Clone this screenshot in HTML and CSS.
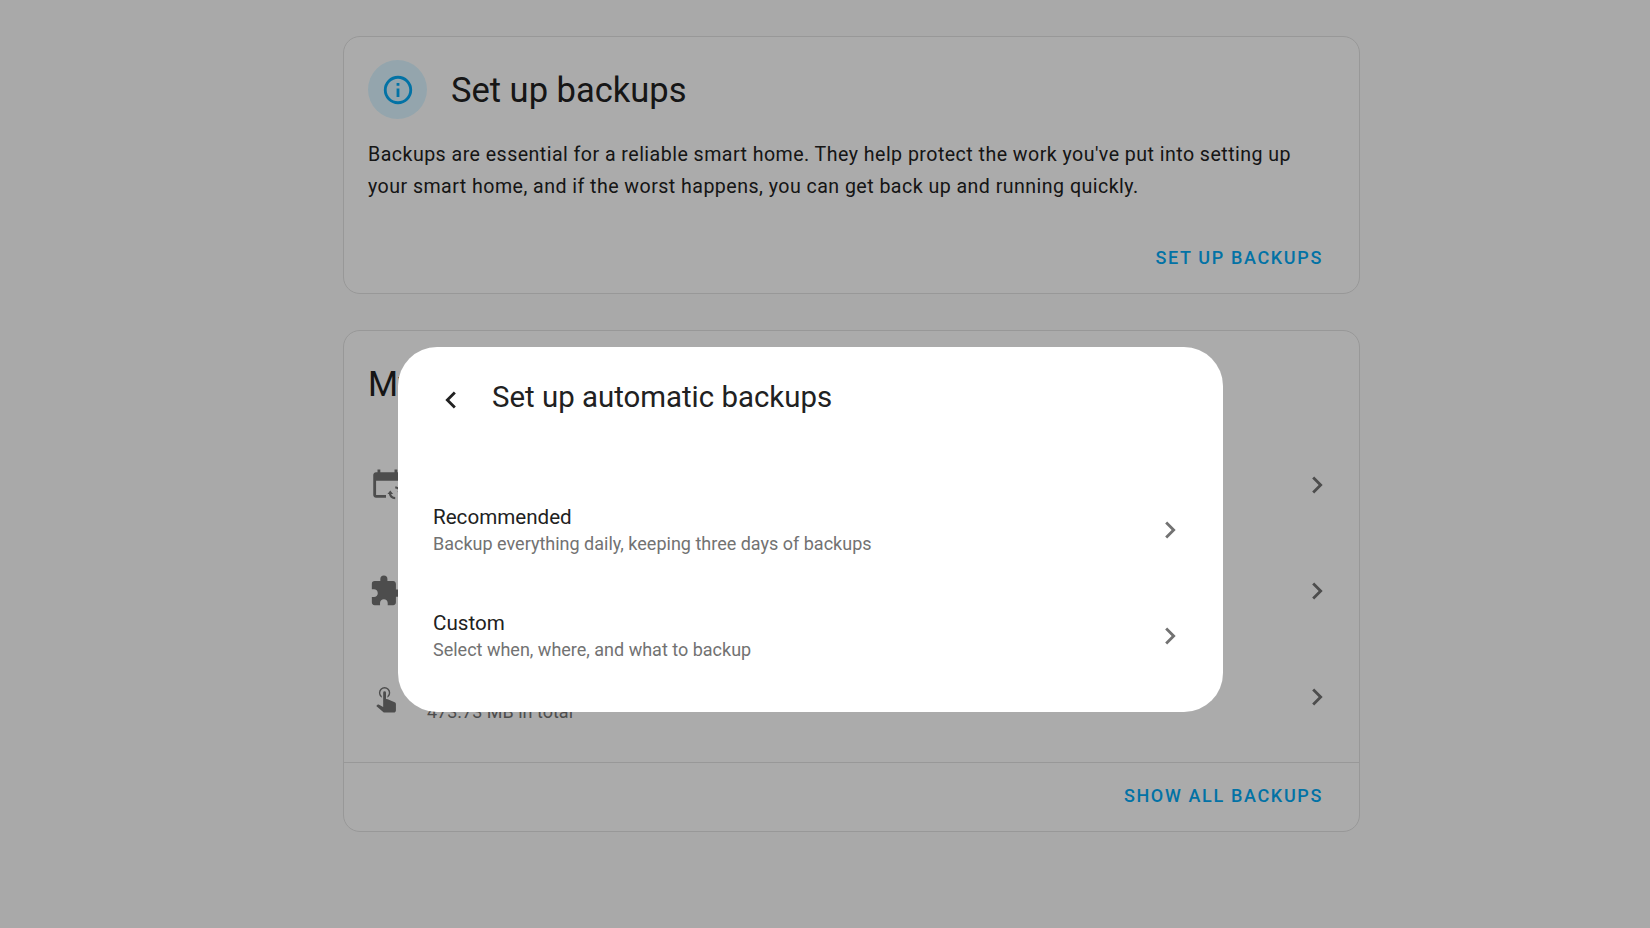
FILE: index.html
```html
<!DOCTYPE html>
<html lang="en">
<head>
    <meta charset="UTF-8">
    <title>Backups</title>
    <link rel="stylesheet" href="styles.css">
</head>
<body>
    <main class="page">
        <section class="card">
            <div class="card-head">
                <div class="info-badge">
                    <svg class="icon" viewBox="0 0 24 24"><path d="M11,9H13V7H11M12,20C7.59,20 4,16.41 4,12C4,7.59 7.59,4 12,4C16.41,4 20,7.59 20,12C20,16.41 16.41,20 12,20M12,2A10,10 0 0,0 2,12A10,10 0 0,0 12,22A10,10 0 0,0 22,12A10,10 0 0,0 12,2M11,17H13V11H11V17Z"/></svg>
                </div>
                <h2>Set up backups</h2>
            </div>
            <p class="card-text">Backups are essential for a reliable smart home. They help protect the work you've put into setting up your smart home, and if the worst happens, you can get back up and running quickly.</p>
            <div class="card-actions plain">
                <a class="action">SET UP BACKUPS</a>
            </div>
        </section>

        <section class="card">
            <h2 class="list-title">My backups</h2>
            <div class="rows">
                <div class="row">
                    <svg class="icon row-icon" viewBox="0 0 24 24"><path d="M5 3H6V1H8V3H18V1H20V3H21C22.1 3 23 3.9 23 5V11.5H21V9H5V19H12V21H5C3.9 21 3 20.1 3 19V5C3 3.9 3.9 3 5 3Z"/><path d="M18.5 13V14.5C20 14.5 21.2 15.5 21.4 16.6H20L22 19.2L24 16.6H22.9C22.7 14.5 20.8 13 18.5 13ZM15 15.8L13 18.4H14.1C14.3 20.5 16.2 22 18.5 22V20.5C17 20.5 15.8 19.5 15.6 18.4H17L15 15.8Z"/></svg>
                    <div class="row-text">
                        <div class="row-name">Automatic backups</div>
                        <div class="row-sub">3 backups</div>
                    </div>
                    <svg class="icon chevron" viewBox="0 0 24 24"><path d="M8.59,16.58L13.17,12L8.59,7.41L10,6L16,12L10,18L8.59,16.58Z"/></svg>
                </div>
                <div class="row">
                    <svg class="icon row-icon" viewBox="0 0 24 24"><path d="M20.5,11H19V7C19,5.89 18.1,5 17,5H13V3.5A2.5,2.5 0 0,0 10.5,1A2.5,2.5 0 0,0 8,3.5V5H4A2,2 0 0,0 2,7V10.8H3.5C5,10.8 6.2,12 6.2,13.5C6.2,15 5,16.2 3.5,16.2H2V20A2,2 0 0,0 4,22H7.8V20.5C7.8,19 9,17.8 10.5,17.8C12,17.8 13.2,19 13.2,20.5V22H17A2,2 0 0,0 19,20V16H20.5A2.5,2.5 0 0,0 23,13.5A2.5,2.5 0 0,0 20.5,11Z"/></svg>
                    <div class="row-text">
                        <div class="row-name">Additional backups</div>
                        <div class="row-sub">1 backup</div>
                    </div>
                    <svg class="icon chevron" viewBox="0 0 24 24"><path d="M8.59,16.58L13.17,12L8.59,7.41L10,6L16,12L10,18L8.59,16.58Z"/></svg>
                </div>
                <div class="row">
                    <svg class="icon row-icon" viewBox="0 0 24 24"><path d="M10,9A1,1 0 0,1 11,8A1,1 0 0,1 12,9V13.47L13.21,13.6L18.15,15.79C18.68,16.03 19,16.56 19,17.14V21.5C18.97,22.32 18.32,22.97 17.5,23H11C10.62,23 10.26,22.85 10,22.57L5.1,18.37L5.84,17.6C6.03,17.39 6.3,17.28 6.58,17.28H6.8L10,19V9M11,5A4,4 0 0,1 15,9C15,10.5 14.2,11.77 13,12.46V11.24C13.61,10.69 14,9.89 14,9A3,3 0 0,0 11,6A3,3 0 0,0 8,9C8,9.89 8.39,10.69 9,11.24V12.46C7.8,11.77 7,10.5 7,9A4,4 0 0,1 11,5Z"/></svg>
                    <div class="row-text">
                        <div class="row-name">Manual backups</div>
                        <div class="row-sub">473.73 MB in total</div>
                    </div>
                    <svg class="icon chevron" viewBox="0 0 24 24"><path d="M8.59,16.58L13.17,12L8.59,7.41L10,6L16,12L10,18L8.59,16.58Z"/></svg>
                </div>
            </div>
            <div class="card-actions">
                <a class="action">SHOW ALL BACKUPS</a>
            </div>
        </section>
    </main>

    <div class="scrim"></div>

    <div class="dialog">
        <div class="dialog-head">
            <svg class="icon back" viewBox="0 0 24 24"><path d="M15.41,16.58L10.83,12L15.41,7.41L14,6L8,12L14,18L15.41,16.58Z"/></svg>
            <h3>Set up automatic backups</h3>
        </div>
        <div class="option">
            <div class="row-text">
                <div class="option-name">Recommended</div>
                <div class="option-sub">Backup everything daily, keeping three days of backups</div>
            </div>
            <svg class="icon option-chevron" viewBox="0 0 24 24"><path d="M8.59,16.58L13.17,12L8.59,7.41L10,6L16,12L10,18L8.59,16.58Z"/></svg>
        </div>
        <div class="option">
            <div class="row-text">
                <div class="option-name">Custom</div>
                <div class="option-sub">Select when, where, and what to backup</div>
            </div>
            <svg class="icon option-chevron" viewBox="0 0 24 24"><path d="M8.59,16.58L13.17,12L8.59,7.41L10,6L16,12L10,18L8.59,16.58Z"/></svg>
        </div>
    </div>
</body>
</html>
```

FILE: styles.css
```css
* {
    box-sizing: border-box;
}
html, body {
    height: 100%;
}
body {
    margin: 0;
    overflow: hidden;
    background-color: #f9f9f9;
    font-family: Roboto, "Liberation Sans", sans-serif;
    color: #212121;
}
.page {
    width: 1017px;
    margin-left: 343px;
    padding-top: 36px;
    display: flex;
    flex-direction: column;
    gap: 36px;
}
.card {
    background-color: #fdfdfd;
    border: 1px solid #e0e0e0;
    border-radius: 17px;
}
.card-head {
    display: flex;
    align-items: center;
    gap: 24px;
    padding: 23px 24px 0;
}
h2 {
    margin: 0;
    font-size: 34.5px;
    font-weight: 400;
    line-height: 59px;
}
.card-head h2 {
    line-height: 40px;
    margin-top: 1px;
}
.info-badge {
    width: 59px;
    height: 59px;
    border-radius: 50%;
    background-color: #daf4ff;
    color: #03a9f4;
    display: flex;
    align-items: center;
    justify-content: center;
}
.icon {
    display: block;
    width: 34px;
    height: 34px;
    fill: currentColor;
    flex-shrink: 0;
}
.card-text {
    margin: 20px 37px 0 24px;
    font-size: 19.6px;
    line-height: 32px;
    letter-spacing: 0.46px;
}
.card-actions {
    display: flex;
    justify-content: flex-end;
    padding: 21px 36px 23px;
    border-top: 1px solid #e0e0e0;
}
.card-actions.plain {
    border-top: 0;
    padding-top: 43px;
    padding-bottom: 23px;
}
.action {
    font-size: 18px;
    font-weight: 500;
    line-height: 24px;
    letter-spacing: 1.65px;
    color: #03a9f4;
}
.list-title {
    padding: 24px 24px 0;
}
.rows {
    padding-top: 18px;
    padding-bottom: 12px;
}
.row {
    height: 106px;
    display: flex;
    align-items: center;
    padding: 0 25px;
    color: #727272;
}
.row-icon {
    margin-right: 24px;
}
.row-text {
    flex: 1;
}
.row-name {
    font-size: 22.4px;
    line-height: 29px;
    color: #212121;
}
.row-sub {
    font-size: 18px;
    line-height: 28px;
}
.chevron {
    color: #727272;
}
.scrim {
    position: fixed;
    inset: 0;
    background-color: rgba(0, 0, 0, 0.32);
}
.dialog {
    position: fixed;
    left: 398px;
    top: 347px;
    width: 825px;
    height: 365px;
    background-color: #fff;
    border-radius: 39px;
}
.dialog-head {
    display: flex;
    align-items: center;
    height: 130px;
    padding: 6px 0 30px 36px;
}
.back {
    color: #212121;
}
h3 {
    margin: -6px 0 0 24px;
    font-size: 29.4px;
    font-weight: 400;
}
.option {
    height: 106px;
    display: flex;
    align-items: center;
    padding: 0 36px 0 35px;
}
.option-name {
    font-size: 20.6px;
    line-height: 28px;
    color: #212121;
}
.option-sub {
    font-size: 18px;
    line-height: 26px;
    color: #727272;
}
.option-chevron {
    color: #727272;
}
```
